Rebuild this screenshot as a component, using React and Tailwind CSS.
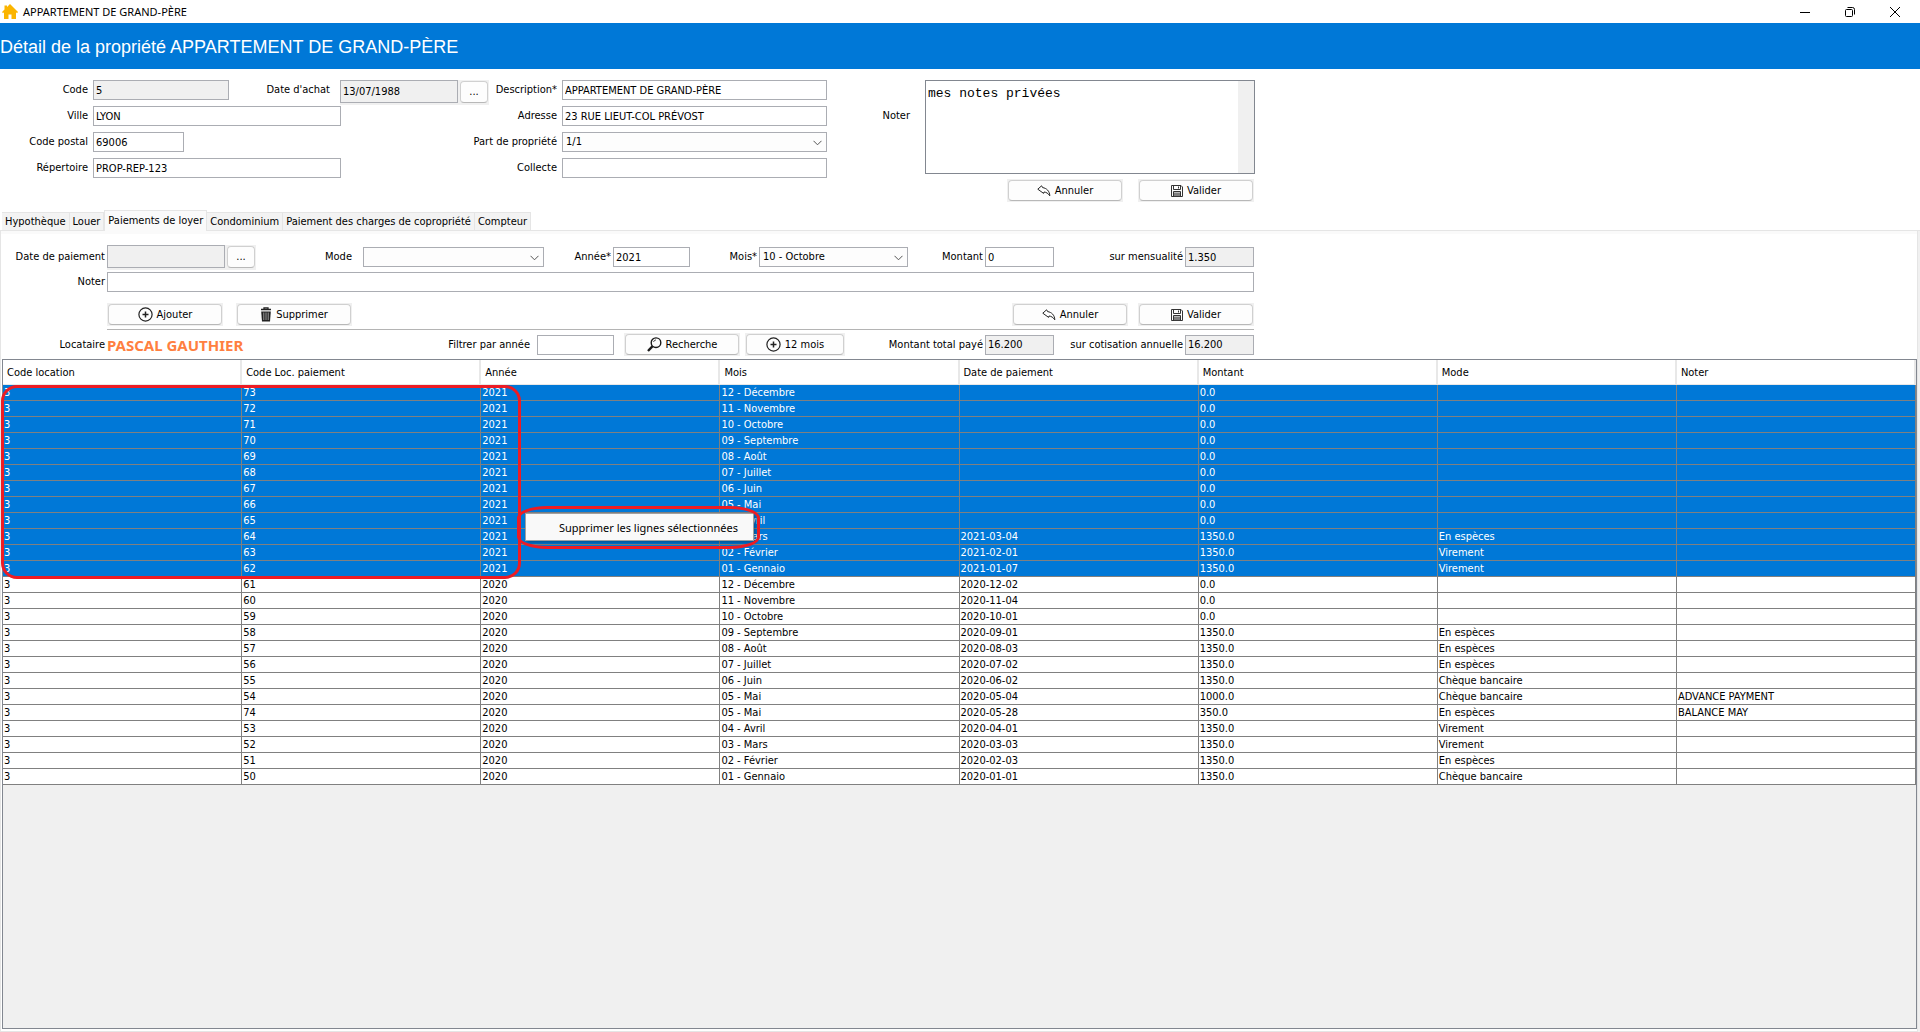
import React, { useState } from 'react';

const TABS = [
    'Hypothèque',
    'Louer',
    'Paiements de loyer',
    'Condominium',
    'Paiement des charges de copropriété',
    'Compteur',
];

const COLUMNS = ['Code location', 'Code Loc. paiement', 'Année', 'Mois', 'Date de paiement', 'Montant', 'Mode', 'Noter'];

const ROWS = [
    ['3', '73', '2021', '12 - Décembre', '', '0.0', '', ''],
    ['3', '72', '2021', '11 - Novembre', '', '0.0', '', ''],
    ['3', '71', '2021', '10 - Octobre', '', '0.0', '', ''],
    ['3', '70', '2021', '09 - Septembre', '', '0.0', '', ''],
    ['3', '69', '2021', '08 - Août', '', '0.0', '', ''],
    ['3', '68', '2021', '07 - Juillet', '', '0.0', '', ''],
    ['3', '67', '2021', '06 - Juin', '', '0.0', '', ''],
    ['3', '66', '2021', '05 - Mai', '', '0.0', '', ''],
    ['3', '65', '2021', '04 - Avril', '', '0.0', '', ''],
    ['3', '64', '2021', '03 - Mars', '2021-03-04', '1350.0', 'En espèces', ''],
    ['3', '63', '2021', '02 - Février', '2021-02-01', '1350.0', 'Virement', ''],
    ['3', '62', '2021', '01 - Gennaio', '2021-01-07', '1350.0', 'Virement', ''],
    ['3', '61', '2020', '12 - Décembre', '2020-12-02', '0.0', '', ''],
    ['3', '60', '2020', '11 - Novembre', '2020-11-04', '0.0', '', ''],
    ['3', '59', '2020', '10 - Octobre', '2020-10-01', '0.0', '', ''],
    ['3', '58', '2020', '09 - Septembre', '2020-09-01', '1350.0', 'En espèces', ''],
    ['3', '57', '2020', '08 - Août', '2020-08-03', '1350.0', 'En espèces', ''],
    ['3', '56', '2020', '07 - Juillet', '2020-07-02', '1350.0', 'En espèces', ''],
    ['3', '55', '2020', '06 - Juin', '2020-06-02', '1350.0', 'Chèque bancaire', ''],
    ['3', '54', '2020', '05 - Mai', '2020-05-04', '1000.0', 'Chèque bancaire', 'ADVANCE PAYMENT'],
    ['3', '74', '2020', '05 - Mai', '2020-05-28', '350.0', 'En espèces', 'BALANCE MAY'],
    ['3', '53', '2020', '04 - Avril', '2020-04-01', '1350.0', 'Virement', ''],
    ['3', '52', '2020', '03 - Mars', '2020-03-03', '1350.0', 'Virement', ''],
    ['3', '51', '2020', '02 - Février', '2020-02-03', '1350.0', 'En espèces', ''],
    ['3', '50', '2020', '01 - Gennaio', '2020-01-01', '1350.0', 'Chèque bancaire', ''],
];

const HouseIcon = () => (
    <svg width="16" height="16" viewBox="0 0 16 16" fill="#fbb500" aria-hidden="true">
        <path d="M8 0 L16 8 L15 9.2 L14 8.3 V15 H9.5 V10.5 H6.5 V15 H2 V8.3 L1 9.2 L0 8 L2.5 5.5 V1.5 H5 V3 Z" />
    </svg>
);

const UndoIcon = () => (
    <svg width="14" height="12" viewBox="0 0 14 12" fill="#fff" stroke="#222" strokeWidth="1" strokeLinejoin="round" aria-hidden="true">
        <path d="M.8 4.2 L4.6 .8 L5.6 2.6 C9.6 3.2 12.6 6 12.8 10.8 C11 8.4 9.4 7.2 7 7 L6.6 8.4 Z" />
    </svg>
);

const SaveIcon = () => (
    <svg width="12" height="12" viewBox="0 0 12 12" fill="none" stroke="#333" strokeWidth="1" aria-hidden="true">
        <path d="M.5 .5 H10 L11.5 2 V11.5 H.5 Z M2.5 .5 V4.5 H9.5 V.5 M7.5 1.5 V3.5 M2.5 11.5 V6.5 H9.5 V11.5" />
        <path d="M3 8 H9 M3 10 H9" stroke="#777" />
        <path d="M3 9 H9 M3 11 H9" stroke="#444" />
    </svg>
);

const PlusIcon = () => (
    <svg width="15" height="15" viewBox="0 0 15 15" fill="none" stroke="#222" strokeWidth="1.2" aria-hidden="true">
        <circle cx="7.5" cy="7.5" r="6.6" />
        <path d="M4.5 7.5 H10.5 M7.5 4.5 V10.5" strokeWidth="1.5" />
    </svg>
);

const TrashIcon = () => (
    <svg width="12" height="15" viewBox="0 0 12 15" fill="none" aria-hidden="true">
        <path d="M1 2.5 H11 M4 2 V.8 H8 V2" stroke="#222" strokeWidth="1.3" />
        <path d="M1.2 4.5 H10.8 L10 14.5 H2 Z" fill="#222" />
        <path d="M3.8 5.5 V13 M6 5.5 V13 M8.2 5.5 V13" stroke="#bbb" strokeWidth=".8" />
    </svg>
);

const SearchIcon = () => (
    <svg width="15" height="15" viewBox="0 0 15 15" fill="none" stroke="#1a1a1a" aria-hidden="true">
        <circle cx="9" cy="5.7" r="4.8" strokeWidth="1.4" />
        <path d="M6.5 5 A2.8 2.8 0 0 1 9 2.9" strokeWidth=".8" />
        <path d="M5.6 9.2 L1 14" strokeWidth="2.4" />
    </svg>
);

function Field({ id, label, value = '', width, readOnly, labelWidth = '', gap = 'mr-[5px]' }) {
    return (
        <>
            <label htmlFor={id} className={`text-right leading-5 ${labelWidth} ${gap}`}>{label}</label>
            <input
                id={id}
                type="text"
                defaultValue={value}
                readOnly={readOnly}
                className={`h-5 border border-[#abadb3] px-[2px] outline-none ${readOnly ? 'bg-[#f0f0f0]' : 'bg-white'} ${width}`}
            />
        </>
    );
}

function DateField({ id, label, value = '', labelWidth = '', gap, boxClass }) {
    return (
        <>
            <label htmlFor={id} className={`text-right leading-5 ${labelWidth} ${gap}`}>{label}</label>
            <div className={`flex h-[25px] items-start gap-[2px] bg-[#f0f0f0] pr-px ${boxClass}`}>
                <input
                    id={id}
                    type="text"
                    readOnly
                    defaultValue={value}
                    className="h-[23px] w-[118px] border border-[#abadb3] bg-[#f0f0f0] px-[2px] outline-none"
                />
                <button type="button" aria-label="Choisir une date" className="mt-px h-[22px] w-7 rounded border border-[#d0d0d0] border-b-[#b8b8b8] bg-[#fdfdfd] text-center">
                    ...
                </button>
            </div>
        </>
    );
}

function SelectField({ id, label, value, width, labelWidth = '', gap = 'mr-[5px]' }) {
    return (
        <>
            <label htmlFor={id} className={`text-right leading-5 ${labelWidth} ${gap}`}>{label}</label>
            <div className={`relative ${width}`}>
                <select id={id} defaultValue={value} className="block h-5 w-full appearance-none border border-[#abadb3] bg-[#fdfdfd] px-[3px] outline-none">
                    <option value={value}>{value}</option>
                </select>
                <svg className="pointer-events-none absolute right-[5px] top-2" width="9" height="6" viewBox="0 0 9 6" fill="none" stroke="#555" aria-hidden="true">
                    <path d="M.5 .8 L4.5 4.8 L8.5 .8" />
                </svg>
            </div>
        </>
    );
}

function ActionButton({ icon, children, width = 'w-[116px]' }) {
    return (
        <div className={`bg-[#f0f0f0] p-px ${width}`}>
            <button type="button" className="flex h-[21px] w-full items-center justify-center gap-1 rounded border border-[#d0d0d0] border-b-[#b8b8b8] bg-[#fdfdfd]">
                {icon}
                <span>{children}</span>
            </button>
        </div>
    );
}

function TitleBar() {
    return (
        <div className="flex h-[23px] items-center bg-white pl-[2px] font-['Noto_Sans',sans-serif] text-[11px]">
            <HouseIcon />
            <span className="ml-[5px]">APPARTEMENT DE GRAND-PÈRE</span>
            <div className="ml-auto mr-5 flex items-center gap-[35px]">
                <button type="button" aria-label="Réduire">
                    <svg width="10" height="10" viewBox="0 0 10 10" stroke="#000"><path d="M0 5.5 H10" /></svg>
                </button>
                <button type="button" aria-label="Restaurer">
                    <svg width="10" height="10" viewBox="0 0 10 10" fill="none" stroke="#000">
                        <rect x=".5" y="2.5" width="7" height="7" rx="1" />
                        <path d="M2.5 .5 H7.5 Q9.5 .5 9.5 2.5 V7.5" />
                    </svg>
                </button>
                <button type="button" aria-label="Fermer">
                    <svg width="10" height="10" viewBox="0 0 10 10" stroke="#000"><path d="M0 0 L10 10 M10 0 L0 10" /></svg>
                </button>
            </div>
        </div>
    );
}

function PropertyForm() {
    return (
        <div className="flex items-start pt-[11px]">
            <div className="flex w-[827px] flex-col gap-[6px]">
                <div className="flex items-start">
                    <Field id="code" label="Code" value="5" width="w-[136px]" labelWidth="w-[88px]" readOnly />
                    <DateField id="date-achat" label="Date d'achat" value="13/07/1988" labelWidth="w-[101px]" gap="mr-[10px]" boxClass="-mb-[5px]" />
                    <div className="ml-auto flex items-center">
                        <Field id="description" label="Description*" value="APPARTEMENT DE GRAND-PÈRE" width="w-[265px]" />
                    </div>
                </div>
                <div className="flex items-center">
                    <Field id="ville" label="Ville" value="LYON" width="w-[248px]" labelWidth="w-[88px]" />
                    <div className="ml-auto flex items-center">
                        <Field id="adresse" label="Adresse" value="23 RUE LIEUT-COL PRÉVOST" width="w-[265px]" />
                    </div>
                </div>
                <div className="flex items-center">
                    <Field id="cp" label="Code postal" value="69006" width="w-[91px]" labelWidth="w-[88px]" />
                    <div className="ml-auto flex items-center">
                        <SelectField id="part" label="Part de propriété" value="1/1" width="w-[265px]" />
                    </div>
                </div>
                <div className="flex items-center">
                    <Field id="repertoire" label="Répertoire" value="PROP-REP-123" width="w-[248px]" labelWidth="w-[88px]" />
                    <div className="ml-auto flex items-center">
                        <Field id="collecte" label="Collecte" width="w-[265px]" />
                    </div>
                </div>
            </div>
            <div className="flex w-[428px] flex-col items-end gap-[5px]">
                <div className="flex">
                    <label htmlFor="notes" className="mr-[15px] mt-[28px]">Noter</label>
                    <div className="flex h-[94px] w-[330px] border border-[#828790]">
                        <textarea
                            id="notes"
                            defaultValue="mes notes privées"
                            className="flex-1 resize-none bg-white px-[2px] py-[5px] font-['Liberation_Mono',monospace] text-[13px] leading-4 outline-none"
                        />
                        <div className="w-4 bg-[#f0f0f0]"></div>
                    </div>
                </div>
                <div className="flex gap-[15px] pr-px">
                    <ActionButton icon={<UndoIcon />}>Annuler</ActionButton>
                    <ActionButton icon={<SaveIcon />}>Valider</ActionButton>
                </div>
            </div>
        </div>
    );
}

function TabBar({ active, onSelect }) {
    return (
        <div role="tablist" className="mt-2 flex items-end border-b border-[#e5e5e5] pl-[2px]">
            {TABS.map((tab) => (
                <button
                    key={tab}
                    type="button"
                    role="tab"
                    aria-selected={tab === active}
                    onClick={() => onSelect(tab)}
                    className={
                        tab === active
                            ? '-mb-px h-[21px] border border-b-0 border-[#e5e5e5] bg-[#fafafa] px-[3px] pb-px'
                            : 'h-[18px] border-t border-r border-[#e5e5e5] bg-[#f3f3f3] px-[3px] pt-px'
                    }
                >
                    {tab}
                </button>
            ))}
        </div>
    );
}

function PaymentForm() {
    return (
        <div className="w-[1253px]">
            <div className="flex h-5 items-start">
                <DateField id="date-paiement" label="Date de paiement" labelWidth="w-[104px]" gap="mr-[2px]" boxClass="-mt-[2px]" />
                <div className="ml-auto flex items-center">
                    <SelectField id="mode" label="Mode" value="" width="w-[181px]" gap="mr-[11px]" />
                    <Field id="annee" label="Année*" value="2021" width="w-[77px]" labelWidth="w-[67px]" gap="mr-[2px]" />
                    <SelectField id="mois" label="Mois*" value="10 - Octobre" width="w-[149px]" labelWidth="w-[67px]" gap="mr-[2px]" />
                    <Field id="montant" label="Montant" value="0" width="w-[69px]" labelWidth="w-[75px]" gap="mr-[2px]" />
                    <Field id="mensualite" label="sur mensualité" value="1.350" width="w-[69px]" labelWidth="w-[129px]" gap="mr-[2px]" readOnly />
                </div>
            </div>
            <div className="mt-[5px] flex items-center">
                <Field id="noter" label="Noter" width="flex-1" labelWidth="w-[104px]" gap="mr-[2px]" />
            </div>
            <div className="ml-[106px] mt-[11px] flex gap-[13px] border-b border-[#b4b4b4] pb-[3px]">
                <ActionButton icon={<PlusIcon />}>Ajouter</ActionButton>
                <ActionButton icon={<TrashIcon />}>Supprimer</ActionButton>
                <div className="ml-auto flex gap-[10px]">
                    <ActionButton icon={<UndoIcon />}>Annuler</ActionButton>
                    <ActionButton icon={<SaveIcon />}>Valider</ActionButton>
                </div>
            </div>
            <div className="mt-[3px] flex h-[23px] items-center">
                <span className="mr-[2px] w-[104px] text-right">Locataire</span>
                <strong className="font-['Noto_Sans',sans-serif] text-[15px] leading-5 text-[#ff7f40]">PASCAL GAUTHIER</strong>
                <div className="ml-auto flex items-center">
                    <Field id="filtre" label="Filtrer par année" width="w-[77px]" gap="mr-[7px]" />
                    <div className="ml-[10px] flex gap-[5px]">
                        <ActionButton icon={<SearchIcon />}>Recherche</ActionButton>
                        <ActionButton icon={<PlusIcon />} width="w-[100px]">12 mois</ActionButton>
                    </div>
                    <Field id="total" label="Montant total payé" value="16.200" width="w-[69px]" labelWidth="w-[138px]" gap="mr-[2px]" readOnly />
                    <Field id="cotisation" label="sur cotisation annuelle" value="16.200" width="w-[69px]" labelWidth="w-[129px]" gap="mr-[2px]" readOnly />
                </div>
            </div>
        </div>
    );
}

function PaymentTable() {
    return (
        <div className="relative ml-px mb-[2px] mt-[3px] flex-1 border border-[#828790] bg-[#f0f0f0]">
            <table className="w-full table-fixed border-separate border-spacing-0">
                <thead>
                    <tr>
                        {COLUMNS.map((col) => (
                            <th key={col} className="h-[25px] border-b border-r-2 border-[#e8e8e8] bg-white px-1 pb-0 pt-[2px] text-left font-normal">
                                {col}
                            </th>
                        ))}
                    </tr>
                </thead>
                <tbody>
                    {ROWS.map((row) => (
                        <tr key={row[1]} className={row[2] === '2021' ? 'bg-[#0078d7] text-white' : 'bg-white'}>
                            {row.map((cell, i) => (
                                <td key={i} className="h-4 border-b border-r border-[#808080] px-px py-0 leading-[15px]">{cell}</td>
                            ))}
                        </tr>
                    ))}
                </tbody>
            </table>

            {/* Highlight around the selected rows */}
            <div className="pointer-events-none absolute -left-[2px] top-[25px] h-[194px] w-[520px] rounded-[16px] border-[3px] border-[#ed1c24]"></div>

            {/* Context menu */}
            <div role="menu" className="absolute left-[522px] top-[153px] border border-[#a0a0a0] bg-[#f9f9f9] shadow-[2px_2px_3px_rgba(0,0,0,0.3)]">
                <button type="button" role="menuitem" className="h-[26px] pl-[33px] pr-[15px] pt-[2px] font-['Noto_Sans',sans-serif] text-[11px]">
                    Supprimer les lignes sélectionnées
                </button>
            </div>
            <div className="pointer-events-none absolute left-[514px] top-[146px] h-[43px] w-[243px] rounded-[30px/12px] border-[3px] border-[#ed1c24]"></div>
        </div>
    );
}

export default function App() {
    const [activeTab, setActiveTab] = useState('Paiements de loyer');

    return (
        <div className="flex min-h-screen flex-col whitespace-nowrap bg-white font-['DejaVu_Sans_Condensed','DejaVu_Sans',sans-serif] text-[11px] leading-4 text-black">
            <TitleBar />
            <h1 className="flex h-[46px] items-center bg-[#0078d7] pt-px font-['Liberation_Sans',sans-serif] text-[18px] text-white">
                Détail de la propriété APPARTEMENT DE GRAND-PÈRE
            </h1>
            <PropertyForm />
            <TabBar active={activeTab} onSelect={setActiveTab} />
            <div className="flex flex-1 flex-col bg-[#f0f0f0] pr-[2px]">
                <div className="flex flex-1 flex-col border-x border-b border-[#e5e5e5] bg-white">
                    <div className="mb-[13px] h-[3px] bg-[#fafafa]"></div>
                    <PaymentForm />
                    <PaymentTable />
                </div>
            </div>
        </div>
    );
}
